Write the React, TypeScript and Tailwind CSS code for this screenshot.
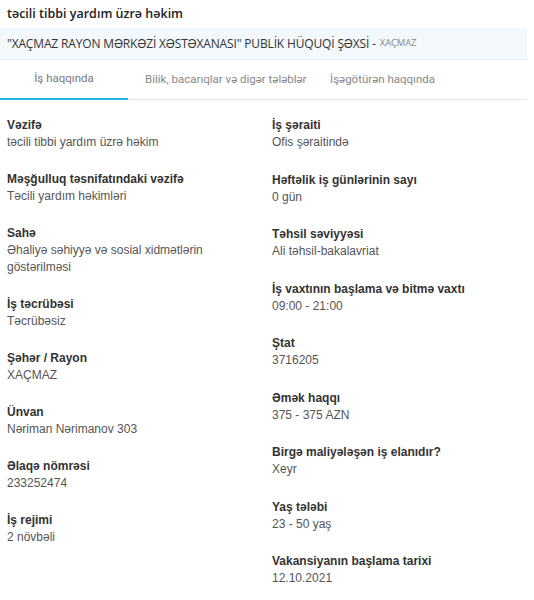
const LEFT = [
  { label: 'Vəzifə', value: 'təcili tibbi yardım üzrə həkim' },
  { label: 'Məşğulluq təsnifatındaki vəzifə', value: 'Təcili yardım həkimləri' },
  { label: 'Sahə', value: 'Əhaliyə səhiyyə və sosial xidmətlərin göstərilməsi' },
  { label: 'İş təcrübəsi', value: 'Təcrübəsiz' },
  { label: 'Şəhər / Rayon', value: 'XAÇMAZ' },
  { label: 'Ünvan', value: 'Nəriman Nərimanov 303' },
  { label: 'Əlaqə nömrəsi', value: '233252474' },
  { label: 'İş rejimi', value: '2 növbəli' },
]

const RIGHT = [
  { label: 'İş şəraiti', value: 'Ofis şəraitində' },
  { label: 'Həftəlik iş günlərinin sayı', value: '0 gün' },
  { label: 'Təhsil səviyyəsi', value: 'Ali təhsil-bakalavriat' },
  { label: 'İş vaxtının başlama və bitmə vaxtı', value: '09:00 - 21:00' },
  { label: 'Ştat', value: '3716205' },
  { label: 'Əmək haqqı', value: '375 - 375 AZN' },
  { label: 'Birgə maliyələşən iş elanıdır?', value: 'Xeyr' },
  { label: 'Yaş tələbi', value: '23 - 50 yaş' },
  { label: 'Vakansiyanın başlama tarixi', value: '12.10.2021' },
]

function Field({ label, value }: { label: string; value: string }) {
  return (
    <div className="text-[12px] leading-[17px]">
      <div className="font-bold text-[#333]">{label}</div>
      <div className="text-[#555]">{value}</div>
    </div>
  )
}

export default function App() {
  return (
    <div className="w-[534px] min-h-[600px] bg-white font-['Liberation_Sans',Arial,sans-serif]">
      <div className="w-[527px]">
        {/* Title */}
        <h1 className="px-[7px] pt-[4px] h-[28px] font-['Open_Sans',sans-serif] text-[12.5px] font-semibold leading-[20px] text-[#222]">
          təcili tibbi yardım üzrə həkim
        </h1>

        {/* Employer band */}
        <div className="h-[32px] flex items-center px-[7px] bg-[#f3f8fc] border-b border-[#e6edf3] font-['Open_Sans',sans-serif] text-[12px] text-[#333] tracking-[-0.15px]">
          "XAÇMAZ RAYON MƏRKƏZİ XƏSTƏXANASI" PUBLİK HÜQUQİ ŞƏXSİ -
          <span className="ml-[4px] text-[9.5px] text-[#888]">XAÇMAZ</span>
        </div>

        {/* Tabs */}
        <div className="flex h-[40px] border-b border-[#e2e2e2] font-['Roboto',sans-serif] text-[11.5px] text-[#888]">
          <div className="w-[128px] -mb-px flex items-center justify-center border-b-[2px] border-[#22b4e4] text-[#777]">
            İş haqqında
          </div>
          <div className="ml-[17px] w-[185px] flex items-center">Bilik, bacarıqlar və digər tələblər</div>
          <div className="flex items-center">İşəgötürən haqqında</div>
        </div>

        {/* Details */}
        <div className="flex pt-[17px]">
          <div className="w-[265px] pl-[7px] pr-[20px] flex flex-col gap-[20px]">
            {LEFT.map((f) => (
              <Field key={f.label} {...f} />
            ))}
          </div>
          <div className="flex-1 pl-[7px] flex flex-col gap-[20.5px]">
            {RIGHT.map((f) => (
              <Field key={f.label} {...f} />
            ))}
          </div>
        </div>
      </div>
    </div>
  )
}
